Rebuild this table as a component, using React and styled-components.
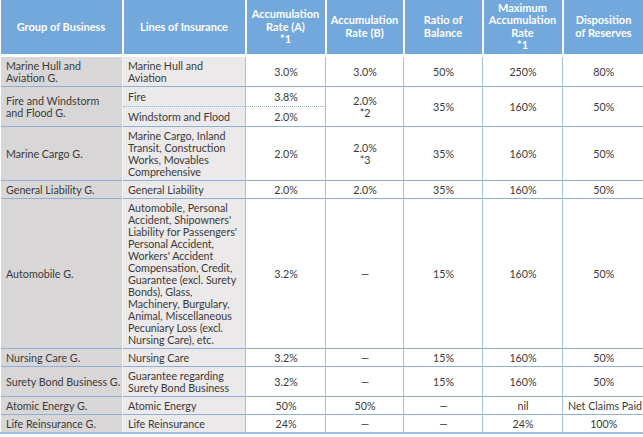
import React from "react";
import styled, { createGlobalStyle } from "styled-components";

const Global = createGlobalStyle`
  html, body { margin: 0; padding: 0; background: #fff; }
  body { font-family: Lato, "Open Sans", sans-serif; }
`;

const Table = styled.table`
  width: 643px;
  border-collapse: collapse;
  table-layout: fixed;
  font-size: 10.7px;
  line-height: 12px;
  color: #3a3a3a;
`;

const Th = styled.th`
  background: #72a8dc;
  color: #fff;
  font-weight: 700;
  font-size: 11px;
  text-align: center;
  vertical-align: middle;
  height: 55px;
  padding: 0 2px;
  border-right: 2px solid #fff;
  border-bottom: 3px solid #fff;
  box-sizing: border-box;
  &:last-child { border-right: none; }
`;

const HeadText = styled.span`
  white-space: pre;
  display: block;
  line-height: 12.5px;
`;

const Row = styled.tr`
  border-top: 1px solid #8eaedc;
  &:last-child { border-bottom: 2px solid #9dbde6; }
`;

const Td = styled.td`
  padding: ${(p) => (p.$tall ? "4px 4px 3px 5px" : "3px 4px 2px 5px")};
  vertical-align: middle;
  text-align: ${(p) => (p.$kind === "num" ? "center" : "left")};
  background: ${(p) =>
    p.$kind === "group" ? "#d8d6d6" : p.$kind === "line" ? "#ebe9e9" : "#fff"};
  border-left: 1px solid
    ${(p) => (p.$kind === "group" ? "transparent" : p.$kind === "line" ? "#f4f4f4" : "#a9bfe6")};
  border-bottom: ${(p) => (p.$dotted ? "1px dotted #9ab4dc" : "none")};
  white-space: pre;
`;

const cols = [122, 123, 80, 78, 79, 80, 81];

const headers = [
  "Group of Business",
  "Lines of Insurance",
  "Accumulation\nRate (A)\n*1",
  "Accumulation\nRate (B)",
  "Ratio of\nBalance",
  "Maximum\nAccumulation\nRate\n*1",
  "Disposition\nof Reserves",
];

const first = ["Marine Hull and\nAviation G.", "Marine Hull and\nAviation", "3.0%", "3.0%", "50%", "250%", "80%"];

const rest = [
  ["Marine Cargo G.", "Marine Cargo, Inland\nTransit, Construction\nWorks, Movables\nComprehensive", "2.0%", "2.0%\n*3", "35%", "160%", "50%"],
  ["General Liability G.", "General Liability", "2.0%", "2.0%", "35%", "160%", "50%"],
  ["Automobile G.", "Automobile, Personal\nAccident, Shipowners'\nLiability for Passengers'\nPersonal Accident,\nWorkers' Accident\nCompensation, Credit,\nGuarantee (excl. Surety\nBonds), Glass,\nMachinery, Burgulary,\nAnimal, Miscellaneous\nPecuniary Loss (excl.\nNursing Care), etc.", "3.2%", "—", "15%", "160%", "50%"],
  ["Nursing Care G.", "Nursing Care", "3.2%", "—", "15%", "160%", "50%"],
  ["Surety Bond Business G.", "Guarantee regarding\nSurety Bond Business", "3.2%", "—", "15%", "160%", "50%"],
  ["Atomic Energy G.", "Atomic Energy", "50%", "50%", "—", "nil", "Net Claims Paid"],
  ["Life Reinsurance G.", "Life Reinsurance", "24%", "—", "—", "24%", "100%"],
];

function DataRow({ r }) {
  return (
    <Row>
      <Td $kind="group">{r[0]}</Td>
      <Td $kind="line">{r[1]}</Td>
      {r.slice(2).map((v, i) => (
        <Td key={i} $kind="num">{v}</Td>
      ))}
    </Row>
  );
}

export default function App() {
  return (
    <>
      <Global />
      <Table>
        <colgroup>
          {cols.map((w, i) => (
            <col key={i} style={{ width: w }} />
          ))}
        </colgroup>
        <thead>
          <tr>
            {headers.map((h, i) => (
              <Th key={i}>
                <HeadText>{h}</HeadText>
              </Th>
            ))}
          </tr>
        </thead>
        <tbody>
          <DataRow r={first} />
          <Row>
            <Td $kind="group" rowSpan={2}>{"Fire and Windstorm\nand Flood G."}</Td>
            <Td $kind="line" $dotted $tall>Fire</Td>
            <Td $kind="num" $dotted $tall>3.8%</Td>
            <Td $kind="num" rowSpan={2}>{"2.0%\n*2"}</Td>
            <Td $kind="num" rowSpan={2}>35%</Td>
            <Td $kind="num" rowSpan={2}>160%</Td>
            <Td $kind="num" rowSpan={2}>50%</Td>
          </Row>
          <tr>
            <Td $kind="line" $tall>Windstorm and Flood</Td>
            <Td $kind="num" $tall>2.0%</Td>
          </tr>
          {rest.map((r, i) => (
            <DataRow key={i} r={r} />
          ))}
        </tbody>
      </Table>
    </>
  );
}
